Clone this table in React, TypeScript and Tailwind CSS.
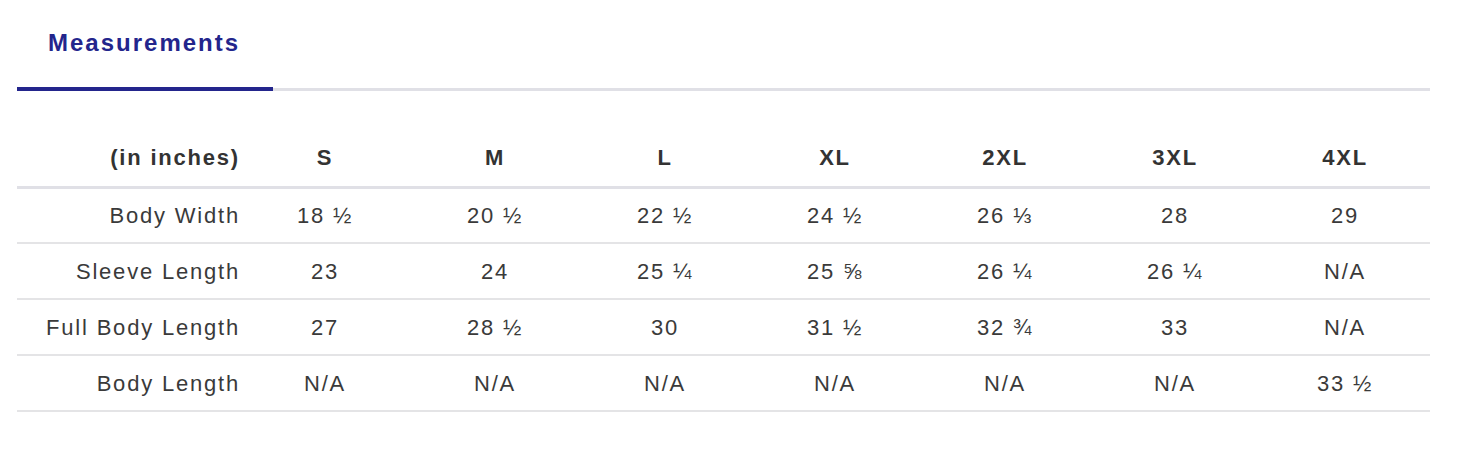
const sizes = ["S", "M", "L", "XL", "2XL", "3XL", "4XL"];

const rows: { label: string; values: string[] }[] = [
  { label: "Body Width", values: ["18 ½", "20 ½", "22 ½", "24 ½", "26 ⅓", "28", "29"] },
  { label: "Sleeve Length", values: ["23", "24", "25 ¼", "25 ⅝", "26 ¼", "26 ¼", "N/A"] },
  { label: "Full Body Length", values: ["27", "28 ½", "30", "31 ½", "32 ¾", "33", "N/A"] },
  { label: "Body Length", values: ["N/A", "N/A", "N/A", "N/A", "N/A", "N/A", "33 ½"] },
];

export default function App() {
  return (
    <main className="w-[1470px] h-[464px] bg-white pl-[17px] pr-[40px] font-['Liberation_Sans',Arial,sans-serif]">
      {/* Tabs */}
      <div className="flex items-end border-b-[3px] border-[#e0e0e6]">
        <div className="w-[256px] h-[91px] -mb-[3px] border-b-4 border-[#23258c] pl-[31px] pt-[28px]">
          <span className="text-[24px] leading-[30px] font-bold tracking-[2px] text-[#23258c]">
            Measurements
          </span>
        </div>
      </div>

      {/* Size chart */}
      <table className="mt-[38px] w-full table-fixed border-collapse text-[22px] tracking-[1.8px] text-[#3a3a3a]">
        <colgroup>
          <col className="w-[223px]" />
          {sizes.map((s) => (
            <col key={s} className="w-[170px]" />
          ))}
        </colgroup>
        <thead>
          <tr className="h-[58px] border-b-[3px] border-[#e0e0e6]">
            <th className="text-right font-bold text-[#333]">(in inches)</th>
            {sizes.map((s) => (
              <th key={s} className="text-center font-bold text-[#333]">
                {s}
              </th>
            ))}
          </tr>
        </thead>
        <tbody>
          {rows.map((r) => (
            <tr key={r.label} className="h-[56px] border-b-2 border-[#e4e4e6]">
              <td className="text-right font-normal">{r.label}</td>
              {r.values.map((v, i) => (
                <td key={i} className="text-center">
                  {v}
                </td>
              ))}
            </tr>
          ))}
        </tbody>
      </table>
    </main>
  );
}
